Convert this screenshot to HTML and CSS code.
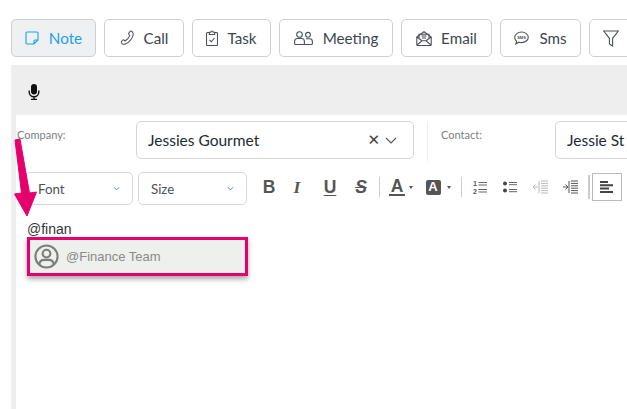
FILE: index.html
```html
<!DOCTYPE html>
<html lang="en">
<head>
<meta charset="utf-8">
<title>Note</title>
<link rel="stylesheet" href="styles.css">
</head>
<body>
<div class="page">
  <nav class="tabs">
    <button class="tab tab-active tab-note">
      <svg class="ico" viewBox="0 0 14 14"><path d="M1 2a1 1 0 0 1 1-1h10a1 1 0 0 1 1 1v7l-4 4H2a1 1 0 0 1-1-1z M13 9h-3a1 1 0 0 0-1 1v3"/></svg>
      <span>Note</span>
    </button>
    <button class="tab tab-call">
      <svg class="ico" viewBox="0 0 16 16"><path d="M11 .8c.9-.5 1.500-.2 2.200.6 1 1.200 1.200 2.200.7 3.700C12.800 8.800 9.300 12.800 5.600 14.400c-1.400.6-2.400.5-3.400-.4-.9-.9-1.200-1.600-.7-2.300l1.400-1.400c.6-.5 1.100-.4 1.600 0l.9.9c2.300-1.200 4.200-3.500 5.100-6l-.9-.8c-.5-.5-.6-1-.2-1.600z"/></svg>
      <span>Call</span>
    </button>
    <button class="tab tab-task">
      <svg class="ico" viewBox="0 0 12 16"><path d="M3 2.500H1.500a1 1 0 0 0-1 1v11a1 1 0 0 0 1 1h9a1 1 0 0 0 1-1v-11a1 1 0 0 0-1-1H9"/><path d="M3.300 2.200h1.500a1.200 1.200 0 0 1 2.400 0h1.500v2.300H3.300z"/><path d="M3.500 10l1.800 1.800 3.200-3.800"/></svg>
      <span>Task</span>
    </button>
    <button class="tab tab-meeting">
      <svg class="ico" viewBox="0 0 19 14"><circle cx="5.500" cy="3.500" r="2.800"/><circle cx="14" cy="3.800" r="2.400"/><path d="M.6 12v-1.500c0-1.800 1.400-3 2.800-3h4.200c1.400 0 2.800 1.200 2.800 3v3H1.500a.9.900 0 0 1-.9-.9z"/><path d="M12 7.800h3.500c1.600 0 2.900 1.100 2.900 2.800v1.900a1 1 0 0 1-1 1h-7"/></svg>
      <span>Meeting</span>
    </button>
    <button class="tab tab-email">
      <svg class="ico" viewBox="0 0 16 15"><path d="M.8 6L8 .8 15.200 6v7.700a.8.800 0 0 1-.8.800H1.600a.8.800 0 0 1-.8-.8z"/><path d="M1 14l5-4.200h4l5 4.200M.8 6L6 9.800M15.200 6L10 9.800"/><path d="M3 7.500V3.300h10v4.200"/><path class="thick" d="M5.500 5h5M6 7h4"/></svg>
      <span>Email</span>
    </button>
    <button class="tab tab-sms">
      <svg class="ico" viewBox="0 0 15 14"><path d="M7.500 1C11.100 1 14.300 3.400 14.300 6.300S11.100 11.600 7.500 11.600c-.9 0-1.800-.1-2.600-.4L1.800 12.800l.8-2.600C1.400 9.200.7 7.800.7 6.300.7 3.400 3.900 1 7.500 1z"/><text class="sms-mark" x="7.500" y="7.800">SMS</text></svg>
      <span>Sms</span>
    </button>
    <button class="tab tab-filter">
      <svg class="ico" viewBox="0 0 16 17"><path d="M.7 1h14.600L9.600 8.300v7.700l-3.200-2V8.300z"/></svg>
    </button>
  </nav>

  <section class="panel">
    <div class="mic-bar">
      <svg class="mic" viewBox="0 0 12 16"><rect x="3" y="0" width="6" height="10.500" rx="3" class="fill"/><path d="M1.200 6.500V8a4.800 4.800 0 0 0 9.600 0V6.500M6 13v2.300M3 15.500h6"/></svg>
    </div>
    <div class="sheet">
      <div class="fields">
        <label class="field-label label-company">Company:</label>
        <div class="combo combo-company">
          <span class="combo-value">Jessies Gourmet</span>
          <span class="combo-x">&#10005;</span>
          <svg class="combo-caret" viewBox="0 0 12 7"><path d="M1 1l5 5 5-5"/></svg>
        </div>
        <div class="field-divider"></div>
        <label class="field-label label-contact">Contact:</label>
        <div class="combo combo-contact"><span class="combo-value">Jessie St</span></div>
      </div>

      <div class="format-bar">
        <div class="select select-font"><span>Font</span><svg viewBox="0 0 8 5"><path d="M1 1l3 3 3-3"/></svg></div>
        <div class="select select-size"><span>Size</span><svg viewBox="0 0 8 5"><path d="M1 1l3 3 3-3"/></svg></div>
        <div class="fmt-group">
          <span class="fmt fmt-b">B</span>
          <span class="fmt fmt-i">I</span>
          <span class="fmt fmt-u">U</span>
          <span class="fmt fmt-s">S</span>
          <i class="sep sep-one"></i>
          <span class="fmt fmt-color">A</span><i class="mini-caret caret-color"></i>
          <span class="fmt fmt-bg"><b>A</b></span><i class="mini-caret caret-bg"></i>
          <i class="sep sep-two"></i>
          <svg class="list list-num" viewBox="0 0 14 14"><path class="soft-line" d="M5.500 2.500H14M5.500 5H14M5.500 9.500H14M5.500 12H14"/><text class="num" x="0" y="6">1</text><text class="num" x="0" y="13.500">2</text></svg>
          <svg class="list list-bullet" viewBox="0 0 14 14"><circle cx="2" cy="3.500" r="2" class="fill"/><circle cx="2" cy="10.500" r="2" class="fill"/><path class="soft-line" d="M6 2.500h8M6 4.700h8M6 9.500h8M6 11.700h8"/></svg>
          <svg class="list list-out" viewBox="0 0 15 14"><path class="thin-line" d="M8 1h7M8 3.400h7M8 5.800h7M8 8.200h7M8 10.600h7M8 13h7M6 1v12M0 7h5M2.500 4.500L0 7l2.500 2.500"/></svg>
          <svg class="list list-in" viewBox="0 0 15 14"><path class="thin-line" d="M8 1h7M8 3.400h7M8 5.800h7M8 8.200h7M8 10.600h7M8 13h7M6 1v12M0 7h5M2.500 4.500L5 7l-2.500 2.500"/></svg>
          <i class="sep sep-three"></i>
          <span class="align-btn"><svg viewBox="0 0 14 12"><path class="bold-line" d="M0 1h8M0 4.300h13M0 7.600h9M0 11h13"/></svg></span>
        </div>
      </div>

      <div class="editor">
        <p class="typed">@finan</p>
        <div class="mention">
          <svg class="avatar" viewBox="0 0 26 26"><circle cx="13" cy="13" r="11.500"/><circle cx="13" cy="10" r="4"/><path d="M5.500 21c.5-3 2.500-4.500 5-4.500h5c2.500 0 4.500 1.500 5 4.500"/></svg>
          <span>@Finance Team</span>
        </div>
      </div>
    </div>
  </section>

  <svg class="arrow" viewBox="0 0 26 81"><path d="M3 3l5-1 9.500 54 7-1L15 79 2.500 57l7-1z"/></svg>
</div>
</body>
</html>
```
FILE: styles.css
```css
* { box-sizing: border-box; }
html, body { margin: 0; padding: 0; background: #fff; }
.page {
  position: relative;
  width: 627px;
  height: 409px;
  overflow: hidden;
  font-family: Lato, "Liberation Sans", sans-serif;
  color: #3b4550;
}
.tabs {
  display: flex;
  gap: 8px;
  padding: 19px 0 0 11px;
  height: 65px;
}
.tab {
  flex: none;
  height: 38px;
  padding: 0;
  display: flex;
  align-items: center;
  justify-content: center;
  gap: 9px;
  background: #fff;
  border: 1px solid #cfcfcf;
  border-radius: 5px;
  font: inherit;
  font-size: 15.2px;
  color: #3b4550;
}
.tab-active { background: #eef0f1; color: #1aa3e8; }
.tab-note { width: 85px; gap: 10px; }
.tab-call { width: 80px; }
.tab-task { width: 79px; }
.tab-meeting { width: 114px; gap: 10px; }
.tab-email { width: 91px; }
.tab-sms { width: 81px; gap: 10px; }
.tab-filter { width: 60px; justify-content: flex-start; padding-left: 13px; }
.ico {
  fill: none;
  stroke: #4b5258;
  stroke-width: 1.1;
  flex: none;
}
.tab-note .ico { width: 14px; height: 14px; }
.tab-call .ico { width: 15px; height: 16px; }
.tab-task .ico { width: 12px; height: 16px; }
.tab-meeting .ico { width: 19px; height: 14px; }
.tab-email .ico { width: 16px; height: 15px; }
.tab-sms .ico { width: 15px; height: 14px; }
.tab-filter .ico { width: 16px; height: 17px; }
.tab-active .ico { stroke: #1aa3e8; }
.thick { stroke-width: 1.4; stroke: #888; }
.sms-mark {
  font-family: "Liberation Sans", sans-serif;
  font-size: 4px;
  font-weight: 700;
  text-anchor: middle;
  fill: #4b5258;
  stroke: none;
}
.panel {
  margin-left: 11px;
  height: 344px;
  padding-left: 5px;
  background: #eeeeee;
  display: flex;
  flex-direction: column;
}
.mic-bar {
  height: 50px;
  display: flex;
  align-items: center;
  padding: 4px 0 0 12px;
  flex: none;
}
.mic {
  width: 12px;
  height: 16px;
  fill: none;
  stroke: #111;
  stroke-width: 1.4;
}
.mic .fill { fill: #111; stroke: none; }
.sheet {
  flex: 1;
  background: #fff;
  display: flex;
  flex-direction: column;
}
.fields {
  display: flex;
  align-items: flex-start;
  height: 57px;
  padding-top: 6px;
}
.field-label {
  flex: none;
  font-size: 11px;
  color: #7b7f85;
  padding: 7px 0 0 1px;
  line-height: 14px;
}
.label-company { width: 120px; }
.label-contact { width: 115px; margin-left: 12px; }
.combo {
  height: 38px;
  border: 1px solid #d5d5d5;
  border-radius: 5px;
  display: flex;
  align-items: center;
  padding-left: 11px;
  font-size: 15.5px;
  color: #222b33;
  flex: none;
}
.combo-company { width: 278px; }
.combo-contact { width: 120px; }
.combo-value { flex: 1; }
.combo-x {
  font-family: "DejaVu Sans", sans-serif;
  font-size: 15px;
  font-weight: 700;
  color: #444;
  margin-right: 5px;
}
.combo-caret {
  width: 12px;
  height: 7px;
  margin-right: 16px;
  fill: none;
  stroke: #555;
  stroke-width: 1.1;
  flex: none;
}
.field-divider {
  width: 1px;
  height: 40px;
  background: #eee;
  margin-left: 13px;
  flex: none;
}
.format-bar {
  display: flex;
  align-items: center;
  height: 33px;
  padding-left: 9px;
  gap: 5px;
}
.select {
  height: 33px;
  border: 1px solid #d8d8d8;
  border-radius: 5px;
  display: flex;
  align-items: center;
  justify-content: space-between;
  padding: 0 12px;
  font-size: 13.3px;
  color: #4b5258;
  flex: none;
}
.select svg {
  width: 7px;
  height: 5px;
  fill: none;
  stroke: #3a8fc4;
  stroke-width: 1.1;
}
.select-font { width: 108px; }
.select-size { width: 109px; }
.fmt-group {
  display: flex;
  align-items: center;
  margin: 0 0 3px 9px;
  color: #555;
}
.fmt {
  flex: none;
  width: 16px;
  text-align: center;
  font-family: "Liberation Sans", sans-serif;
  font-weight: 700;
  font-size: 17.5px;
  line-height: 18px;
  color: #555;
}
.fmt-b { margin-right: 12px; }
.fmt-i { font-style: italic; font-family: "Liberation Serif", serif; margin-right: 17px; }
.fmt-u { text-decoration: underline; text-underline-offset: 2px; margin-right: 15px; }
.fmt-s { font-style: italic; text-decoration: line-through; margin-right: 10px; }
.sep {
  width: 1px;
  height: 20px;
  background: #ccc;
  flex: none;
}
.sep-one { margin-right: 9px; }
.sep-two { margin-right: 11px; }
.sep-three { margin-right: 2px; height: 24px; width: 2px; margin-left: -1px; }
.fmt-color {
  border-bottom: 2px solid #555;
  line-height: 16px;
}
.fmt-bg {
  width: 15px;
  height: 15px;
  background: #555;
  border-radius: 2px;
  display: flex;
  align-items: center;
  justify-content: center;
}
.fmt-bg b { color: #fff; font-size: 13px; }
.mini-caret {
  flex: none;
  width: 0;
  height: 0;
  border-left: 2.5px solid transparent;
  border-right: 2.5px solid transparent;
  border-top: 3px solid #555;
}
.caret-color { margin: 0 13px 0 3.5px; }
.caret-bg { margin: 0 9.5px 0 6.5px; }
.list { flex: none; height: 14px; }
.list-num { width: 14px; margin-right: 16px; }
.list-bullet { width: 14px; margin-right: 16px; }
.list-out { width: 15px; margin-right: 15px; opacity: .4; }
.list-in { width: 15px; margin-right: 11.5px; }
.list .fill { fill: #444; }
.soft-line { stroke: #666; stroke-width: 1; fill: none; }
.thin-line { stroke: #555; stroke-width: 1; fill: none; }
.num { font-family: "Liberation Sans", sans-serif; font-size: 7px; font-weight: 700; fill: #555; }
.align-btn {
  width: 30px;
  height: 28px;
  border: 1px solid #bbb;
  display: flex;
  align-items: center;
  justify-content: center;
  flex: none;
}
.align-btn svg { width: 14px; height: 12px; }
.bold-line { stroke: #444; stroke-width: 2; fill: none; }
.editor { padding: 16px 0 0 11px; }
.typed {
  margin: 0;
  font-family: "Liberation Sans", sans-serif;
  font-size: 14px;
  line-height: 16px;
  color: #333;
}
.mention {
  width: 221px;
  height: 39px;
  margin-top: 0;
  display: flex;
  align-items: center;
  gap: 7px;
  padding-left: 4px;
  background: #eef0ee;
  border: 3px solid #e6006e;
  box-shadow: 0 3px 5px rgba(0,0,0,.35);
  font-family: "Liberation Sans", sans-serif;
  font-size: 13px;
  color: #8a8a8a;
}
.avatar {
  width: 25px;
  height: 25px;
  fill: none;
  stroke: #7d7d7d;
  stroke-width: 2.2;
  flex: none;
}
.arrow {
  position: absolute;
  left: 12px;
  top: 137px;
  width: 26px;
  height: 81px;
  fill: #e6006e;
  stroke: #e6006e;
  stroke-width: 1;
  stroke-linejoin: round;
}
```
